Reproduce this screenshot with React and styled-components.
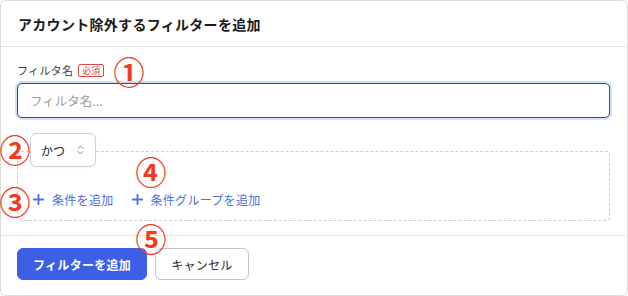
import React from "react";
import styled, { createGlobalStyle } from "styled-components";

const Global = createGlobalStyle`
  html, body { margin: 0; padding: 0; background: #fff; }
  body { font-family: "Noto Sans CJK JP", "Noto Sans", sans-serif; }
  * { box-sizing: border-box; }
`;

const Card = styled.div`
  position: relative;
  width: 628px;
  height: 296px;
  border: 1px solid #dcdcdc;
  border-radius: 6px;
  background: #fff;
  display: flex;
  flex-direction: column;
`;

const Header = styled.div`
  height: 46px;
  flex: none;
  display: flex;
  align-items: center;
  padding: 0 17px;
  border-bottom: 1px solid #e4e4e4;
`;

const Title = styled.h2`
  margin: 0;
  font-size: 14px;
  font-weight: 700;
  letter-spacing: 0.3px;
  color: #1a1a1a;
`;

const Body = styled.div`
  flex: none;
  padding: 16px 17px 14px 16px;
  display: flex;
  flex-direction: column;
  border-bottom: 1px solid #e4e4e4;
`;

const LabelRow = styled.div`
  display: flex;
  align-items: center;
  gap: 5px;
  height: 14px;
`;

const Label = styled.span`
  font-size: 11px;
  letter-spacing: 0.3px;
  color: #3a3a3a;
`;

const Badge = styled.span`
  display: inline-flex;
  align-items: center;
  justify-content: center;
  height: 13px;
  padding: 0 3px;
  border: 1px solid #e04848;
  border-radius: 2px;
  color: #e04848;
  font-size: 9px;
  line-height: 1;
`;

const Input = styled.input`
  margin-top: 6px;
  width: 593px;
  height: 35px;
  border: 1.5px solid #2946ad;
  border-radius: 5px;
  box-shadow: 0 0 0 2px rgba(120, 165, 225, 0.35);
  padding: 0 12px;
  font-family: inherit;
  font-size: 12.5px;
  color: #222;
  outline: none;
  &::placeholder { color: #9a9a9a; }
`;

const Group = styled.div`
  margin-top: 15px;
  display: flex;
  flex-direction: column;
`;

const SelectBox = styled.div`
  position: relative;
  z-index: 1;
  margin-left: 13px;
  width: 66px;
  height: 34px;
  border: 1px solid #d2d2d2;
  border-radius: 6px;
  background: #fff;
  box-shadow: 0 1px 2px rgba(0, 0, 0, 0.06);
  display: flex;
  align-items: center;
  justify-content: space-between;
  padding: 0 11px 0 10px;
  font-size: 12px;
  color: #222;
`;

const DashedBox = styled.div`
  margin-top: -16px;
  width: 593px;
  height: 70px;
  border: 1px dashed #cfcfcf;
  border-radius: 4px;
  padding: 38px 15px 0 15px;
  display: flex;
  gap: 18px;
  align-items: flex-start;
`;

const AddLink = styled.button`
  display: flex;
  align-items: center;
  gap: 8px;
  height: 18px;
  padding: 0;
  border: none;
  background: none;
  color: #4d6fe3;
  font-family: inherit;
  font-size: 12px;
  letter-spacing: 0.3px;
  cursor: pointer;
`;

const Footer = styled.div`
  flex: 1;
  padding: 12px 16px 0 16px;
  display: flex;
  align-items: flex-start;
  gap: 8px;
`;

const Button = styled.button`
  height: 32px;
  padding: 0 15px;
  border-radius: 6px;
  border: 1px solid ${(p) => (p.$primary ? "#3d5fe6" : "#c4c4c4")};
  background: ${(p) => (p.$primary ? "#3d5fe6" : "#fff")};
  color: ${(p) => (p.$primary ? "#fff" : "#2a2a2a")};
  font-family: inherit;
  font-size: 12px;
  font-weight: ${(p) => (p.$primary ? 700 : 400)};
  letter-spacing: 0.3px;
  cursor: pointer;
`;

const Mark = styled.span`
  position: absolute;
  left: ${(p) => p.$x}px;
  top: ${(p) => p.$y}px;
  transform: translate(-50%, -50%);
  font-size: 31px;
  font-weight: 700;
  line-height: 1;
  color: #f23a1c;
  font-family: "Noto Sans CJK JP", sans-serif;
  pointer-events: none;
`;

const Plus = () => (
  <svg width="11" height="11" viewBox="0 0 11 11">
    <path d="M5.5 0.5v10M0.5 5.5h10" stroke="#4d6fe3" strokeWidth="1.8" strokeLinecap="round" />
  </svg>
);

const Chevrons = () => (
  <svg width="7" height="10" viewBox="0 0 7 10">
    <path d="M1 3.5L3.5 1L6 3.5M1 6.5L3.5 9L6 6.5" fill="none" stroke="#8a8a8a" strokeWidth="1" strokeLinecap="round" strokeLinejoin="round" />
  </svg>
);

export default function App() {
  return (
    <>
      <Global />
      <Card>
        <Header>
          <Title>アカウント除外するフィルターを追加</Title>
        </Header>
        <Body>
          <LabelRow>
            <Label>フィルタ名</Label>
            <Badge>必須</Badge>
          </LabelRow>
          <Input placeholder="フィルタ名..." />
          <Group>
            <SelectBox>
              <span>かつ</span>
              <Chevrons />
            </SelectBox>
            <DashedBox>
              <AddLink>
                <Plus />
                条件を追加
              </AddLink>
              <AddLink>
                <Plus />
                条件グループを追加
              </AddLink>
            </DashedBox>
          </Group>
        </Body>
        <Footer>
          <Button $primary>フィルターを追加</Button>
          <Button>キャンセル</Button>
        </Footer>
        <Mark $x={128} $y={69}>①</Mark>
        <Mark $x={14} $y={147}>②</Mark>
        <Mark $x={14} $y={199}>③</Mark>
        <Mark $x={150} $y={169}>④</Mark>
        <Mark $x={150} $y={236}>⑤</Mark>
      </Card>
    </>
  );
}
